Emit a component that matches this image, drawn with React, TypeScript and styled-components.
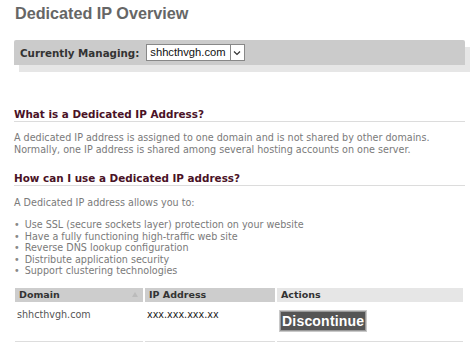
import React from "react";
import styled, { createGlobalStyle } from "styled-components";

const Global = createGlobalStyle`
  html, body { margin: 0; padding: 0; background: #fff; }
  body { font-family: "DejaVu Sans", Verdana, sans-serif; }
`;

const Page = styled.div`
  padding: 2px 9px 0 14px;
  width: 474px;
  box-sizing: border-box;
`;

const Title = styled.h1`
  margin: 0;
  padding-left: 1px;
  font-family: "Liberation Sans", Arial, sans-serif;
  font-weight: bold;
  font-size: 16.2px;
  line-height: 22px;
  color: #666;
`;

const ManageWrap = styled.div`
  margin-top: 16px;
  position: relative;
  padding-bottom: 7px;
`;

const ManageShadow = styled.div`
  position: absolute;
  left: 5px;
  right: -5px;
  top: 7px;
  bottom: 0;
  background: #e6e6e6;
`;

const ManageBar = styled.div`
  position: relative;
  display: flex;
  align-items: center;
  gap: 7px;
  height: 25px;
  padding-left: 6px;
  background: #cbcbcb;
  border-radius: 2px 2px 0 0;
`;

const ManageLabel = styled.span`
  font-weight: bold;
  font-size: 10.3px;
  color: #333;
`;

const Select = styled.div`
  display: flex;
  align-items: stretch;
  height: 17px;
  background: #fff;
  border: 1px solid #888;
  box-sizing: border-box;
  font-family: "Liberation Sans", Arial, sans-serif;
  font-size: 11.2px;
  color: #111;
`;

const SelectText = styled.span`
  padding: 0 4px 0 3px;
  line-height: 15px;
`;

const SelectArrow = styled.span`
  width: 13px;
  border-left: 1px solid #888;
  display: flex;
  align-items: center;
  justify-content: center;
`;

const Heading = styled.h2<{ $top: number }>`
  margin: ${(p) => p.$top}px 0 0 0;
  padding-bottom: 0;
  border-bottom: 1px solid #dcdcdc;
  font-size: 10.4px;
  line-height: 14px;
  font-weight: bold;
  color: #4a1226;
`;

const Para = styled.p<{ $top: number }>`
  margin: ${(p) => p.$top}px 0 0 0;
  font-size: 9.6px;
  line-height: 12px;
  color: #7a7a7a;
`;

const List = styled.ul`
  margin: 10px 0 0 0;
  padding: 0;
  list-style: none;
`;

const Item = styled.li`
  font-size: 9.6px;
  line-height: 11.5px;
  color: #7a7a7a;
  display: flex;
  gap: 5px;
  &::before {
    content: "•";
    color: #888;
  }
`;

const Table = styled.div`
  margin: 11px 0 0 1px;
  display: grid;
  grid-template-columns: 128px 130px 186px;
  column-gap: 2px;
`;

const Th = styled.div<{ $light?: boolean }>`
  height: 14px;
  background: ${(p) => (p.$light ? "#e6e6e6" : "#cdcdcd")};
  font-size: 9.5px;
  font-weight: bold;
  color: #333;
  line-height: 14px;
  padding-left: 4px;
  display: flex;
  justify-content: space-between;
  align-items: center;
`;

const SortArrow = styled.span`
  width: 0;
  height: 0;
  border-left: 3px solid transparent;
  border-right: 3px solid transparent;
  border-bottom: 5px solid #bbb;
  margin-right: 5px;
`;

const Td = styled.div<{ $dark?: boolean }>`
  padding: 7px 0 0 2px;
  height: 32px;
  border-bottom: 1px solid #ddd;
  font-size: 9.6px;
  line-height: 12px;
  color: ${(p) => (p.$dark ? "#222" : "#555")};
`;

const ActionCell = styled(Td)`
  padding-top: 8px;
  height: 31px;
`;

const Button = styled.button`
  display: inline-block;
  margin: 0;
  padding: 0 2px;
  height: 22px;
  background: #555;
  border: 1px solid #c8c8c8;
  outline: 1px solid #999;
  outline-offset: -2px;
  color: #fff;
  font-family: "Liberation Sans", Arial, sans-serif;
  font-weight: bold;
  font-size: 14px;
  line-height: 20px;
  letter-spacing: 0.2px;
`;

export default function App() {
  return (
    <>
      <Global />
      <Page>
        <Title>Dedicated IP Overview</Title>
        <ManageWrap>
          <ManageShadow />
          <ManageBar>
            <ManageLabel>Currently Managing:</ManageLabel>
            <Select>
              <SelectText>shhcthvgh.com</SelectText>
              <SelectArrow>
                <svg width="8" height="6" viewBox="0 0 8 6">
                  <path d="M1 1.5 L4 4.5 L7 1.5" fill="none" stroke="#333" strokeWidth="1.2" />
                </svg>
              </SelectArrow>
            </Select>
          </ManageBar>
        </ManageWrap>
        <Heading $top={35}>What is a Dedicated IP Address?</Heading>
        <Para $top={10}>
          A dedicated IP address is assigned to one domain and is not shared by other domains.
          <br />
          Normally, one IP address is shared among several hosting accounts on one server.
        </Para>
        <Heading $top={15}>How can I use a Dedicated IP address?</Heading>
        <Para $top={11}>A Dedicated IP address allows you to:</Para>
        <List>
          <Item>Use SSL (secure sockets layer) protection on your website</Item>
          <Item>Have a fully functioning high-traffic web site</Item>
          <Item>Reverse DNS lookup configuration</Item>
          <Item>Distribute application security</Item>
          <Item>Support clustering technologies</Item>
        </List>
        <Table>
          <Th>
            Domain
            <SortArrow />
          </Th>
          <Th>IP Address</Th>
          <Th $light>Actions</Th>
          <Td>shhcthvgh.com</Td>
          <Td $dark>xxx.xxx.xxx.xx</Td>
          <ActionCell>
            <Button>Discontinue</Button>
          </ActionCell>
        </Table>
      </Page>
    </>
  );
}
